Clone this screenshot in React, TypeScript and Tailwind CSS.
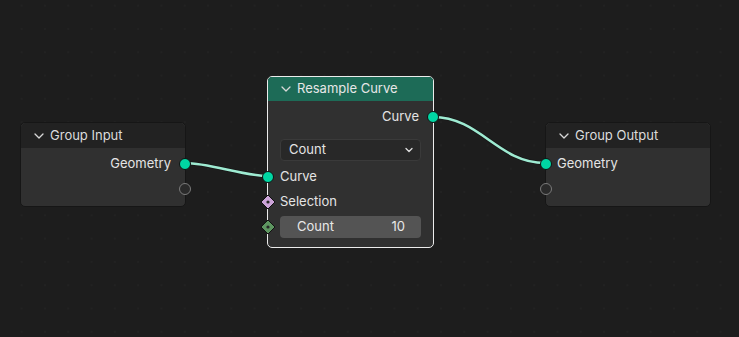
import React from 'react';

const font = { fontFamily: 'Inter, "Noto Sans", sans-serif' };

function Chevron() {
  return (
    <svg width="12" height="12" viewBox="0 0 12 12" className="shrink-0">
      <path d="M2 4 L6 8 L10 4" fill="none" stroke="#d8d8d8" strokeWidth="1.3" strokeLinecap="round" strokeLinejoin="round" />
    </svg>
  );
}

function Socket({ side, kind = 'geo' }: { side: 'left' | 'right'; kind?: 'geo' | 'empty' }) {
  const pos = side === 'left' ? '-left-[6px]' : '-right-[6px]';
  if (kind === 'empty') {
    return <span className={`absolute ${pos} top-1/2 -translate-y-1/2 w-[12px] h-[12px] rounded-full border-[1.5px] border-[#7a7a7a] bg-[#2a2a2a]`} />;
  }
  return <span className={`absolute ${pos} top-1/2 -translate-y-1/2 w-[12px] h-[12px] rounded-full bg-[#00d6a3] border border-[#111]`} />;
}

function Diamond({ color }: { color: string }) {
  return (
    <svg width="16" height="16" viewBox="0 0 16 16" className="absolute -left-[8px] top-1/2 -translate-y-1/2">
      <path d="M8 1 L15 8 L8 15 L1 8 Z" fill={color} stroke="#111" strokeWidth="1" />
      <circle cx="8" cy="8" r="1.6" fill="#262626" />
    </svg>
  );
}

function GroupNode({ title, left, side }: { title: string; left: string; side: 'left' | 'right' }) {
  return (
    <div className={`absolute top-[122px] ${left} w-[166px] h-[85px] rounded-[5px] border border-[#161616] bg-[#303030] flex flex-col`}>
      <div className="h-[25px] bg-[#222222] rounded-t-[5px] flex items-center gap-[5px] pl-[12px] text-[13px] text-[#dcdcdc]">
        <Chevron />
        <span>{title}</span>
      </div>
      <div className="pt-[3px] flex flex-col">
        <div className={`relative h-[25px] flex items-center text-[13px] text-[#e4e4e4] ${side === 'right' ? 'justify-end pr-[14px]' : 'pl-[11px]'}`}>
          Geometry
          <Socket side={side} />
        </div>
        <div className="relative h-[25px]">
          <Socket side={side} kind="empty" />
        </div>
      </div>
    </div>
  );
}

function ResampleNode() {
  return (
    <div className="absolute top-[76px] left-[267px] w-[167px] h-[172px] rounded-[5px] border border-[#ececec] bg-[#303030] flex flex-col">
      <div className="h-[24px] bg-[#1d6b57] rounded-t-[4px] flex items-center gap-[5px] pl-[12px] text-[13px] text-[#e6e6e6]">
        <Chevron />
        <span>Resample Curve</span>
      </div>
      <div className="relative h-[32px] flex items-center justify-end pr-[14px] text-[13px] text-[#e4e4e4]">
        Curve
        <Socket side="right" />
      </div>
      <div className="px-[12px] mt-[6px]">
        <div className="h-[22px] rounded-[4px] bg-[#282828] border border-[#3a3a3a] flex items-center justify-between pl-[8px] pr-[6px] text-[13px] text-[#e4e4e4]">
          <span>Count</span>
          <svg width="10" height="10" viewBox="0 0 10 10">
            <path d="M2 3.5 L5 6.5 L8 3.5" fill="none" stroke="#e0e0e0" strokeWidth="1.3" strokeLinecap="round" strokeLinejoin="round" />
          </svg>
        </div>
      </div>
      <div className="relative h-[25px] mt-[3px] flex items-center pl-[12px] text-[13px] text-[#e4e4e4]">
        Curve
        <Socket side="left" />
      </div>
      <div className="relative h-[25px] flex items-center pl-[12px] text-[13px] text-[#e4e4e4]">
        Selection
        <Diamond color="#cba3d8" />
      </div>
      <div className="relative h-[24px] mt-[1px] px-[12px] flex items-center">
        <Diamond color="#5d9560" />
        <div className="w-full h-[22px] rounded-[4px] bg-[#545454] flex items-center justify-between pl-[17px] pr-[16px] text-[13px] text-[#e8e8e8]">
          <span>Count</span>
          <span>10</span>
        </div>
      </div>
    </div>
  );
}

export default function App() {
  return (
    <div
      className="relative w-[739px] h-[337px] overflow-hidden bg-[#1d1d1d] bg-[radial-gradient(circle,#222222_1px,transparent_1.3px)] bg-[size:23.3px_23.3px] bg-[position:10px_-6px]"
      style={font}
    >
      <svg className="absolute inset-0" width="739" height="337">
        <path d="M185 163 C 210 163, 243 176, 268 176" fill="none" stroke="#111" strokeWidth="4" opacity="0.5" />
        <path d="M185 163 C 210 163, 243 176, 268 176" fill="none" stroke="#9eebd2" strokeWidth="2.5" />
        <path d="M433 117 C 480 117, 498 163, 545 163" fill="none" stroke="#111" strokeWidth="4" opacity="0.5" />
        <path d="M433 117 C 480 117, 498 163, 545 163" fill="none" stroke="#9eebd2" strokeWidth="2.5" />
      </svg>
      <GroupNode title="Group Input" left="left-[20px]" side="right" />
      <ResampleNode />
      <GroupNode title="Group Output" left="left-[545px]" side="left" />
    </div>
  );
}
